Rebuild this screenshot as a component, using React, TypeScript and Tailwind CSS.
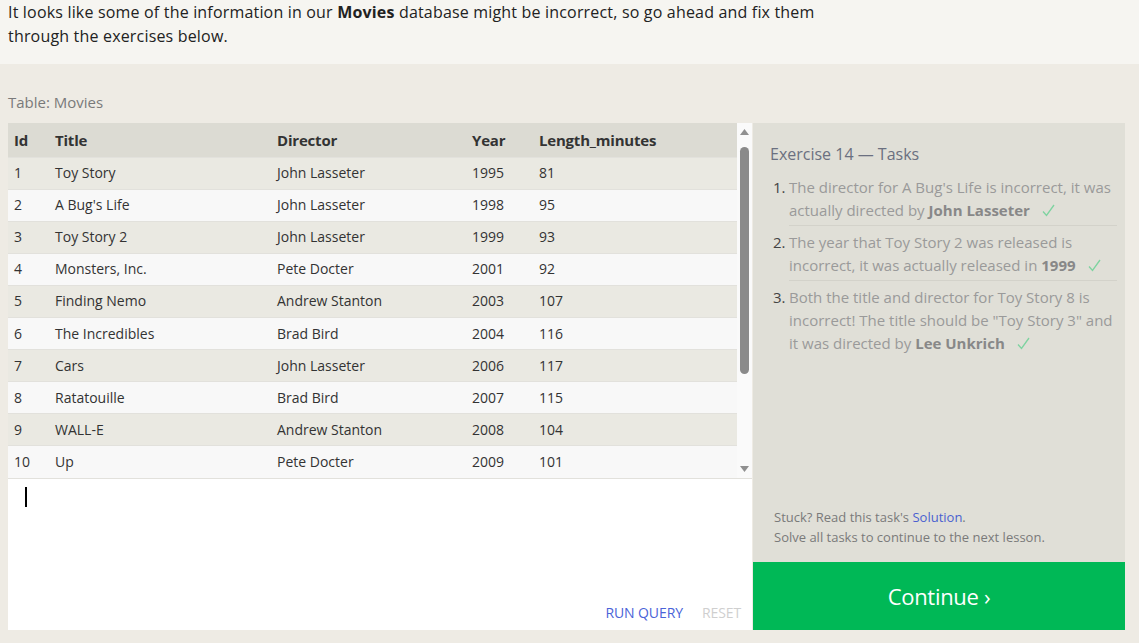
const movies: [number, string, string, number, number][] = [
  [1, "Toy Story", "John Lasseter", 1995, 81],
  [2, "A Bug's Life", "John Lasseter", 1998, 95],
  [3, "Toy Story 2", "John Lasseter", 1999, 93],
  [4, "Monsters, Inc.", "Pete Docter", 2001, 92],
  [5, "Finding Nemo", "Andrew Stanton", 2003, 107],
  [6, "The Incredibles", "Brad Bird", 2004, 116],
  [7, "Cars", "John Lasseter", 2006, 117],
  [8, "Ratatouille", "Brad Bird", 2007, 115],
  [9, "WALL-E", "Andrew Stanton", 2008, 104],
  [10, "Up", "Pete Docter", 2009, 101],
];

export default function App() {
  return (
    <div className="h-[643px] w-[1139px] overflow-hidden bg-[#eeebe4] font-['Open_Sans',sans-serif] text-[#222]">
      <section className="h-[64px] bg-[#f6f5f1] px-2 pt-[0px] text-[16px] leading-[24px] tracking-[0.18px]">
        It looks like some of the information in our <b>Movies</b> database might be incorrect, so go ahead and fix them
        <br />
        through the exercises below.
      </section>

      <div className="px-2 pt-[27px]">
        <p className="text-[15px] leading-[22px] text-[#7a7a7a]">Table: Movies</p>
        <div className="mt-[10px] flex h-[507px] w-[1117px]">
          <div className="flex w-[744px] flex-col">
            <div className="flex h-[355px]">
              <MovieTable />
              <Scrollbar />
            </div>
            <Editor />
          </div>
          <Tasks />
        </div>
      </div>
    </div>
  );
}

function MovieTable() {
  return (
    <table className="w-[729px] table-fixed border-collapse text-[14px] text-[#333]">
      <colgroup>
        <col className="w-[41px]" />
        <col className="w-[222px]" />
        <col className="w-[195px]" />
        <col className="w-[67px]" />
        <col />
      </colgroup>
      <thead>
        <tr className="h-[34px] bg-[#dcdbd3] text-left text-[15px] font-bold tracking-[-0.2px] text-[#333]">
          <th className="pl-[6px]">Id</th>
          <th className="pl-[6px]">Title</th>
          <th className="pl-[6px]">Director</th>
          <th className="pl-[6px]">Year</th>
          <th className="pl-[6px]">Length_minutes</th>
        </tr>
      </thead>
      <tbody>
        {movies.map(([id, title, director, year, len]) => (
          <tr
            key={id}
            className={
              "h-[32px] border-t border-[#e2e1dc] " + (id % 2 === 1 ? "bg-[#eae9e2]" : "bg-[#f8f8f8]")
            }
          >
            <td className="pl-[6px] pb-[1px]">{id}</td>
            <td className="pl-[6px] pb-[1px]">{title}</td>
            <td className="pl-[6px] pb-[1px]">{director}</td>
            <td className="pl-[6px] pb-[1px]">{year}</td>
            <td className="pl-[6px] pb-[1px]">{len}</td>
          </tr>
        ))}
      </tbody>
    </table>
  );
}

function Scrollbar() {
  return (
    <div className="flex w-[15px] flex-col items-center bg-[#fafafa] pt-[6px]">
      <svg width="9" height="6" viewBox="0 0 9 6">
        <path d="M0 6 L4.5 0 L9 6 Z" fill="#909090" />
      </svg>
      <div className="mt-[12px] h-[227px] w-[9px] rounded-full bg-[#8a8a8a]" />
      <div className="flex-1" />
      <svg width="9" height="6" viewBox="0 0 9 6" className="mb-[6px]">
        <path d="M0 0 L4.5 6 L9 0 Z" fill="#909090" />
      </svg>
    </div>
  );
}

function Editor() {
  return (
    <div className="flex flex-1 flex-col border-t border-[#e2e1dc] bg-white">
      <div className="ml-[17px] mt-[8px] h-[20px] w-[2px] bg-black" />
      <div className="flex-1" />
      <div className="flex justify-end gap-[19px] pb-[7px] pr-[11px] text-[14px] tracking-[-0.1px]">
        <span className="text-[#4a63d8]">RUN QUERY</span>
        <span className="text-[#cfcfcf]">RESET</span>
      </div>
    </div>
  );
}

function Check() {
  return (
    <svg width="13" height="13" viewBox="0 0 13 13" className="ml-[12px] inline-block align-[-1px]">
      <path d="M1 7.5 L4.5 11.5 L12 1" fill="none" stroke="#7ed3a0" strokeWidth="1.3" />
    </svg>
  );
}

function Tasks() {
  const items = [
    <>
      The director for A Bug's Life is incorrect, it was actually directed by <b className="text-[#888]">John Lasseter</b>
      <Check />
    </>,
    <>
      The year that Toy Story 2 was released is incorrect, it was actually released in <b className="text-[#888]">1999</b>
      <Check />
    </>,
    <>
      Both the title and director for Toy Story 8 is incorrect! The title should be "Toy Story 3" and it was directed by{" "}
      <b className="text-[#888]">Lee Unkrich</b>
      <Check />
    </>,
  ];
  return (
    <aside className="ml-[1px] flex w-[372px] flex-col bg-[#e0dfd7]">
      <div className="flex-1 pl-[17px] pr-[8px] pt-[20px]">
        <h2 className="text-[16px] leading-[22px] text-[#6b7080]">Exercise 14 — Tasks</h2>
        <ol className="mt-[11px] text-[15px] leading-[23px] text-[#9a9a9a]">
          {items.map((item, i) => (
            <li key={i} className="flex">
              <span className="w-[19px] shrink-0 pl-[3px] text-[#444]">{i + 1}.</span>
              <div className={"flex-1 " + (i < 2 ? "mb-[5px] border-b border-[#d3d2ca] pb-[3px]" : "")}>{item}</div>
            </li>
          ))}
        </ol>
      </div>
      <div className="px-[21px] pb-[15px] text-[13px] leading-[20px] text-[#7a7a7a]">
        <p>
          Stuck? Read this task's <span className="text-[#4a5fd0]">Solution</span>.
        </p>
        <p>Solve all tasks to continue to the next lesson.</p>
      </div>
      <button className="h-[68px] bg-[#00b856] text-[22px] tracking-[-0.3px] text-white">Continue ›</button>
    </aside>
  );
}
